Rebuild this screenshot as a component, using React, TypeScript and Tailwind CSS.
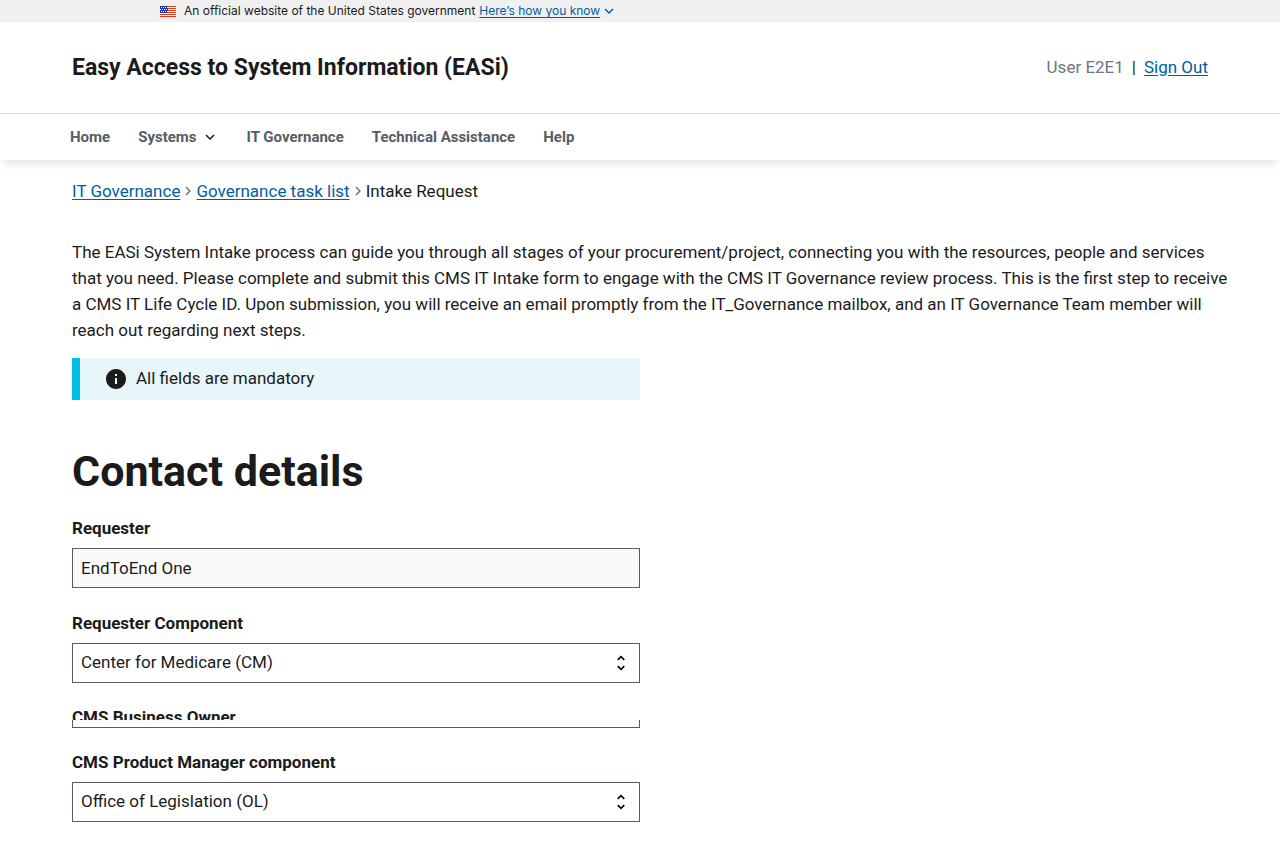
import type { ReactNode } from 'react';

const linkClass = 'text-[#005ea2] underline underline-offset-2';
const labelClass = 'block text-[17px] leading-[22px] font-bold';
const boxClass =
  'block h-10 w-full appearance-none rounded-none border border-[#565c65] px-2 text-[17px] leading-[22px] text-[#1b1b1b]';

function Flag() {
  const stars = [1, 3, 5, 7].flatMap((x) => [1, 3, 5].map((y) => [x, y]));
  return (
    <svg className="h-[11px] w-4" viewBox="0 0 16 11" shapeRendering="crispEdges" aria-hidden="true">
      <path fill="#fff" d="M0 0h16v11H0z" />
      <path
        fill="#db3e1f"
        d="M8 0h8v1H8zM8 2h8v1H8zM8 4h8v1H8zM8 6h8v1H8zM0 8h16v1H0zM0 10h16v1H0z"
      />
      <path fill="#1e33b1" d="M0 0h8v7H0z" />
      {stars.map(([x, y]) => (
        <path key={`${x}-${y}`} fill="#fff" d={`M${x - (y === 3 ? 1 : 0)} ${y}h1v1h-1z`} />
      ))}
    </svg>
  );
}

function Chevron({ className, d = 'M7.4 8.6 12 13.2l4.6-4.6L18 10l-6 6-6-6z' }: { className: string; d?: string }) {
  return (
    <svg className={className} viewBox="0 0 24 24" fill="currentColor" aria-hidden="true">
      <path d={d} />
    </svg>
  );
}

function Separator() {
  return <Chevron className="-mx-px size-[18px] text-[#71767a]" d="M8.6 7.4 10 6l6 6-6 6-1.4-1.4 4.6-4.6z" />;
}

function NavLink({ children }: { children: ReactNode }) {
  return (
    <a href="#" className="whitespace-nowrap">
      {children}
    </a>
  );
}

function SelectField({ id, label, value }: { id: string; label: string; value: string }) {
  return (
    <div>
      <label htmlFor={id} className={labelClass}>
        {label}
      </label>
      <div className="relative mt-[9px]">
        <select id={id} defaultValue={value} className={`${boxClass} bg-white pb-[2px]`}>
          <option>{value}</option>
        </select>
        <svg
          className="pointer-events-none absolute top-[10px] right-[9px] size-5"
          viewBox="0 0 24 24"
          aria-hidden="true"
        >
          <path d="M12 5.83 15.17 9l1.41-1.41L12 3 7.41 7.59 8.83 9 12 5.83zm0 12.34L8.83 15l-1.41 1.41L12 21l4.59-4.59L15.17 15 12 18.17z" />
        </svg>
      </div>
    </div>
  );
}

export default function App() {
  return (
    <div className="min-h-screen overflow-x-hidden bg-white font-['Roboto','Liberation_Sans',sans-serif] text-[17px] text-[#1b1b1b]">
      <div className="bg-[#f0f0f0]">
        <div className="mx-auto flex h-[22px] max-w-5xl items-center px-8 font-['Inter','Liberation_Sans',sans-serif] text-xs">
          <Flag />
          <p className="ml-2">An official website of the United States government</p>
          <button type="button" className="ml-1 flex items-center text-[#005ea2]">
            <span className="underline underline-offset-2">Here’s how you know</span>
            <Chevron className="size-[18px]" />
          </button>
        </div>
      </div>

      <header className="shadow-[0_7px_8px_-3px_rgba(0,0,0,0.1)]">
        <div className="border-b border-[#dcdee0]">
          <div className="mx-auto flex h-[91px] max-w-[1200px] items-center justify-between px-8">
            <p className="pt-[2px] text-[23px] font-bold">Easy Access to System Information (EASi)</p>
            <div className="flex items-center gap-2">
              <span className="text-[#71767a]">User E2E1</span>
              <span>|</span>
              <a href="#" className={linkClass}>
                Sign Out
              </a>
            </div>
          </div>
        </div>
        <nav className="mx-auto flex h-[46px] max-w-[1200px] items-center gap-7 px-[30px] text-[15px] font-bold text-[#565c65]">
          <NavLink>Home</NavLink>
          <button type="button" className="flex items-center gap-1">
            Systems
            <Chevron className="size-[18px] text-[#1b1b1b]" />
          </button>
          <NavLink>IT Governance</NavLink>
          <NavLink>Technical Assistance</NavLink>
          <NavLink>Help</NavLink>
        </nav>
      </header>

      <main className="mx-auto max-w-[1200px] px-8 pt-5">
        <nav aria-label="Breadcrumbs">
          <ol className="flex items-center leading-[22px]">
            <li>
              <a href="#" className={linkClass}>
                IT Governance
              </a>
            </li>
            <Separator />
            <li>
              <a href="#" className={linkClass}>
                Governance task list
              </a>
            </li>
            <Separator />
            <li>Intake Request</li>
          </ol>
        </nav>

        <p className="mt-[37px] -mr-6 leading-[26px]">
          The EASi System Intake process can guide you through all stages of your procurement/project, connecting you
          with the resources, people and services that you need. Please complete and submit this CMS IT Intake form to
          engage with the CMS IT Governance review process. This is the first step to receive a CMS IT Life Cycle ID.
          Upon submission, you will receive an email promptly from the IT_Governance mailbox, and an IT Governance Team
          member will reach out regarding next steps.
        </p>

        <form className="w-1/2">
          <div className="mt-[15px] flex h-[42px] items-center gap-2 border-l-8 border-[#00bde3] bg-[#e7f6f8] pb-px pl-6">
            <svg className="size-6" viewBox="0 0 24 24" fill="currentColor" aria-hidden="true">
              <path d="M12 2C6.48 2 2 6.48 2 12s4.48 10 10 10 10-4.480 10-10S17.520 2 12 2zm1 15h-2v-6h2v6zm0-8h-2V7h2v2z" />
            </svg>
            <p>All fields are mandatory</p>
          </div>

          <h1 className="mt-[47px] text-[43px] leading-[48px] font-bold">Contact details</h1>

          <div className="mt-[22px]">
            <label htmlFor="requester" className={labelClass}>
              Requester
            </label>
            <input
              id="requester"
              type="text"
              disabled
              defaultValue="EndToEnd One"
              className={`${boxClass} mt-[9px] bg-[#fafafa]`}
            />
          </div>

          <div className="mt-6">
            <SelectField id="requester-component" label="Requester Component" value="Center for Medicare (CM)" />
          </div>

          <div className="mt-[23px]">
            <label htmlFor="business-owner" className={`${labelClass} h-[14px] overflow-hidden`}>
              CMS Business Owner
            </label>
            <input
              id="business-owner"
              type="text"
              className="block h-2 w-full border border-t-0 border-[#565c65] px-2"
            />
          </div>

          <div className="mt-[23px]">
            <SelectField
              id="manager-component"
              label="CMS Product Manager component"
              value="Office of Legislation (OL)"
            />
          </div>
        </form>
      </main>
    </div>
  );
}
